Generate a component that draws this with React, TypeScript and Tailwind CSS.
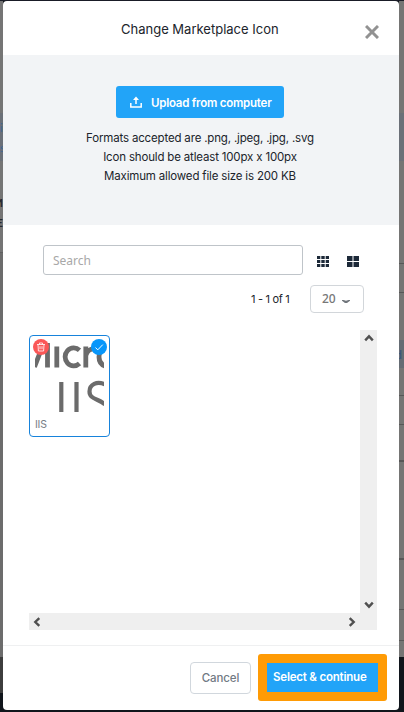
import React from "react";

const Chevron = ({ className }: { className: string }) => (
  <svg viewBox="0 0 10 8" className={"h-2 w-2.5 " + className} fill="none" stroke="#505050" strokeWidth="2.4">
    <path d="M1.2 6.3 5 2.3l3.8 4" />
  </svg>
);

function LeftBackdrop() {
  return (
    <div className="flex w-[3px] shrink-0 flex-col overflow-hidden bg-[#757575] text-[12px] leading-4">
      <div className="h-px bg-[#191b26]" />
      <div className="h-[112px]" />
      <div className="h-[48px] bg-[#6b7078] text-[#3e6793]">
        <div className="pt-[7px]">i</div>
        <div className="pt-[4px]">s</div>
      </div>
      <div className="flex h-[91px] flex-col items-end pt-[34px] font-bold text-[#27282d]">
        <div>M</div>
        <div className="pt-1">E</div>
      </div>
      <div className="h-px bg-[#606060]" />
      <div className="h-[404px] bg-[#6c6c6c]" />
      <div className="h-[36px] bg-[#3d3d3d]" />
      <div className="flex-1 bg-[#10151b]" />
    </div>
  );
}

function RightBackdrop() {
  return (
    <div className="flex flex-1 flex-col overflow-hidden bg-[#757574]">
      <div className="h-px bg-[#191b26]" />
      <div className="h-[112px]" />
      <div className="h-[48px] bg-[#6b7078]" />
      <div className="h-[102px]" />
      <div className="h-px bg-[#575757]" />
      <div className="h-[28px]" />
      <div className="h-px bg-[#575757]" />
      <div className="h-[47px]" />
      <div className="flex h-[28px] justify-end bg-[#656c74] pr-[2px] pt-[7px] text-[12px] leading-4 text-[#31547b]">d</div>
      <div className="h-[27px]" />
      <div className="h-px bg-[#575757]" />
      <div className="h-[28px]" />
      <div className="h-px bg-[#575757]" />
      <div className="h-[35px]" />
      <div className="h-[2px] bg-[#575757]" />
      <div className="h-[96px]" />
      <div className="h-[2px] bg-[#575757]" />
      <div className="h-[49px]" />
      <div className="h-px bg-[#575757]" />
      <div className="h-[30px]" />
      <div className="h-px bg-[#575757]" />
      <div className="h-[16px]" />
      <div className="flex-1 bg-[#10151b]" />
    </div>
  );
}

function IconCard() {
  return (
    <div className="relative h-[102px] w-[81px] rounded-[4px] border border-[#1783db] bg-white">
      <svg viewBox="0 0 69 70" className="ml-[5px] mt-[6px] h-[70px] w-[69px]" fill="none" stroke="#6b6b6b" strokeWidth="4.8">
        <path d="M-.5 25 8 3M12.5 1v24.5M21.8 4.5v21" />
        <path d="M44.5 8.2A8.6 9 0 1 0 44.5 21.5" />
        <path d="M50.8 25.5v-21M51 13q2-6.500 9-6" />
        <path d="M70 6q-6 2-6 9t6 9" />
        <path d="M26.300 40v30M41.500 40v30" strokeWidth="4.2" />
        <path d="M70 42.500c-8-4-15.500 0-15.500 7 0 8 9 7 15.500 13" strokeWidth="4.200" />
      </svg>
      <span className="absolute left-[3px] top-[3px] flex h-4 w-4 items-center justify-center rounded-full bg-[#fa5757]">
        <svg viewBox="0 0 10 10" className="h-2.5 w-2.5" fill="none" stroke="white">
          <path d="M1 2.5h8M3.5 2.5v-1.500h3v1.500M2 2.5l.4 6.500h5.200l.4-6.500M4 4.200v3M6 4.200v3" strokeWidth="0.8" />
        </svg>
      </span>
      <span className="absolute right-[2px] top-[3px] flex h-4 w-4 items-center justify-center rounded-full bg-[#0796fa]">
        <svg viewBox="0 0 10 10" className="h-2.5 w-2.5" fill="none" stroke="white">
          <path d="m1.500 5.600 2.300 2.200L8.800 2.600" />
        </svg>
      </span>
      <div className="ml-[5px] mt-[5px] font-['Inter',sans-serif] text-[10.5px] leading-4 tracking-[-0.2px] text-[#777d85]">IIS</div>
    </div>
  );
}

export default function App() {
  return (
    <div className="flex h-[712px] w-[404px] overflow-hidden bg-[#10151b] font-['Lato',sans-serif] text-[#20242b]">
      <LeftBackdrop />
      <div className="flex w-[396px] shrink-0 flex-col">
        <div className="h-px bg-[#191b26]" />
        <div className="flex h-[709px] flex-col overflow-hidden rounded-[4px] bg-white">
          <div className="flex h-[54px] shrink-0 items-start">
            <h1 className="ml-[118px] mt-[18px] w-[160px] whitespace-nowrap font-['Inter',sans-serif] text-[13px] leading-5">Change Marketplace Icon</h1>
            <svg viewBox="0 0 14 14" className="ml-[84px] mt-[24px] h-[14px] w-[14px]" stroke="#929292" strokeWidth="3">
              <path d="m1 1 12 12M13 1 1 13" />
            </svg>
          </div>
          <div className="flex h-[170px] shrink-0 flex-col items-center bg-[#f2f4f6] pr-[2px] pt-[31px]">
            <button className="flex h-8 w-[168px] items-center rounded-[3px] bg-[#22a4f8] pl-[14px] text-white">
              <svg viewBox="0 0 12 12" className="h-3 w-3" fill="none" stroke="white" strokeWidth="1.5">
                <path d="M.8 7v4h10.4V7M6 8V2" />
                <path d="M3 4 6 .5 9 4Z" fill="white" stroke="none" />
              </svg>
              <span className="ml-[9px] mt-[2px] whitespace-nowrap font-['Inter',sans-serif] text-[11.5px] font-semibold leading-4 tracking-[-0.23px]">Upload from computer</span>
            </button>
            <div className="mt-[11px] whitespace-nowrap text-center font-['Inter',sans-serif] text-[11.5px] leading-[19px] tracking-[-0.17px]">
              <p>Formats accepted are .png, .jpeg, .jpg, .svg</p>
              <p>Icon should be atleast 100px x 100px</p>
              <p>Maximum allowed file size is 200 KB</p>
            </div>
          </div>
          <div className="mt-5 flex h-[30px] shrink-0 items-center pl-10">
            <div className="flex h-[30px] w-[260px] items-center rounded-[3px] border border-[#bfc4c9] pl-[9px] pt-px font-['Noto_Sans',sans-serif] text-[12px] text-[#a8a8a8]">Search</div>
            <svg viewBox="0 0 12 11" className="ml-[14px] mt-[3px] h-[11px] w-3" fill="#1c2938">
              <path d="M0 0h3.3v3H0zM4.3 0h3.4v3H4.3zM8.7 0H12v3H8.7zM0 4h3.3v3H0zM4.3 4h3.4v3H4.3zM8.7 4H12v3H8.7zM0 8h3.3v3H0zM4.3 8h3.4v3H4.3zM8.7 8H12v3H8.7z" />
            </svg>
            <svg viewBox="0 0 12 11" className="ml-[18px] mt-[3px] h-[11px] w-3" fill="#1c2938">
              <path d="M0 0h5.5v5H0zM6.5 0H12v5H6.5zM0 6h5.5v5H0zM6.5 6H12v5H6.5z" />
            </svg>
          </div>
          <div className="mt-[10px] flex h-7 shrink-0 items-center pl-[248px]">
            <span className="w-[59px] whitespace-nowrap font-['Inter',sans-serif] text-[11px] tracking-[-0.3px]">1 - 1 of 1</span>
            <div className="flex h-7 w-[54px] items-center rounded-[4px] border border-[#d2d6da] pl-[11px] text-[#777]">
              <span className="font-['Noto_Sans',sans-serif] text-[12px] font-medium">20</span>
              <svg viewBox="0 0 8 4" className="ml-[6px] mt-1 h-[3px] w-2" fill="#70757b" preserveAspectRatio="none">
                <path d="M0 0h1.500L4 1 6.500 0H8v1L5 4H3L0 1Z" />
              </svg>
            </div>
          </div>
          <div className="ml-[26px] mt-[17px] flex h-[300px] w-[348px] shrink-0 flex-col">
            <div className="flex h-[283px]">
              <div className="flex-1 pt-[5px]"><IconCard /></div>
              <div className="flex w-[17px] flex-col items-center justify-between bg-[#efefef] py-1">
                <Chevron className="" />
                <Chevron className="rotate-180" />
              </div>
            </div>
            <div className="flex h-[17px] items-center justify-between bg-[#efefef] pl-[3px] pr-5">
              <Chevron className="-rotate-90" />
              <Chevron className="rotate-90" />
            </div>
          </div>
          <div className="mt-[15px] flex flex-1 items-start border-t border-[#eff0f1] pl-[187px]">
            <button className="mt-4 h-8 w-[61px] rounded-[4px] border border-[#d1d7dd] pt-px font-['Inter',sans-serif] text-[11.5px] font-medium tracking-[-0.1px] text-[#717983]">Cancel</button>
            <div className="ml-[7px] mt-2 h-[47px] w-[129px] rounded-[3px] bg-[#ff9b05] p-[9px]">
              <button className="h-[29px] w-[111px] whitespace-nowrap bg-[#22a4f8] pl-[6px] pt-px text-left font-['Inter',sans-serif] text-[11.5px] font-semibold tracking-[-0.2px] text-white">Select &amp; continue</button>
            </div>
          </div>
        </div>
      </div>
      <RightBackdrop />
    </div>
  );
}
